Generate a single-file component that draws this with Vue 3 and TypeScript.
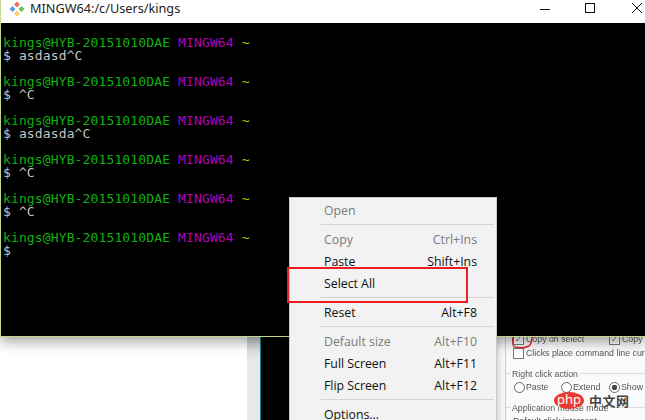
<script setup lang="ts">
interface Item { label?: string; key?: string; off?: boolean; sep?: boolean }
const items: Item[] = [
  { label: 'Open', off: true },
  { sep: true },
  { label: 'Copy', key: 'Ctrl+Ins', off: true },
  { label: 'Paste', key: 'Shift+Ins' },
  { label: 'Select All' },
  { sep: true },
  { label: 'Reset', key: 'Alt+F8' },
  { sep: true },
  { label: 'Default size', key: 'Alt+F10', off: true },
  { label: 'Full Screen', key: 'Alt+F11' },
  { label: 'Flip Screen', key: 'Alt+F12' },
  { sep: true },
  { label: 'Options...' }
]
</script>

<template>
  <div class="desk">
    <div class="back">
      <div class="back-side"></div>
      <div class="back-black"></div>
      <div class="dialog">
        <div class="opts">
          <div class="line">
            <div class="cell w96"><span class="box ticked">✓</span><span>Copy on select</span></div>
            <div class="cell"><span class="box ticked">✓</span><span>Copy a</span></div>
          </div>
          <div class="line">
            <div class="cell"><span class="box"></span><span>Clicks place command line cursor</span></div>
          </div>
          <div class="grp">
            <span class="grp-title">Right click action</span>
            <div class="line">
              <div class="cell w47"><span class="radio"></span><span>Paste</span></div>
              <div class="cell w48"><span class="radio"></span><span>Extend</span></div>
              <div class="cell"><span class="radio on"></span><span>Show m</span></div>
            </div>
          </div>
          <div class="grp">
            <span class="grp-title">Application mouse mode</span>
            <div class="line"><div class="cell"><span>Default click intercept</span></div></div>
          </div>
        </div>
      </div>
      <svg class="scribble" width="24" height="14" viewBox="0 0 24 14">
        <path d="M3 0 Q2 9 5 10 Q13 12 19 9 Q22 6 22 0" fill="none" stroke="#e0262c" stroke-width="1.4" />
      </svg>
      <div class="mark">
        <span class="php">php</span><span class="cn">中文网</span>
      </div>
    </div>

    <section class="term">
      <header class="bar">
        <svg class="logo" width="16" height="16" viewBox="0 0 16 16">
          <path d="M8 0.5 L11 3.5 L8 6.5 L5 3.5Z" fill="#ec7058" />
          <path d="M3.5 5 L6.5 8 L3.5 11 L0.5 8Z" fill="#5a9fe6" />
          <path d="M12.5 5 L15.5 8 L12.5 11 L9.5 8Z" fill="#6cc05c" />
          <path d="M8 9.5 L11 12.5 L8 15.5 L5 12.5Z" fill="#f6d36a" />
        </svg>
        <span class="title">MINGW64:/c/Users/kings</span>
        <span class="spacer"></span>
        <svg class="ctl" width="12" height="12" viewBox="0 0 12 12"><path d="M1 7.5H11" stroke="#111" /></svg>
        <svg class="ctl max" width="12" height="12" viewBox="0 0 12 12"><rect x="1.5" y="1.5" width="9" height="9" fill="none" stroke="#111" /></svg>
        <svg class="ctl close" width="12" height="12" viewBox="0 0 12 12"><path d="M1 1L11 11M11 1L1 11" stroke="#111" /></svg>
      </header>
      <pre class="screen"><b class="g">kings@HYB-20151010DAE</b> <b class="m">MINGW64</b> <b class="y">~</b>
$ asdasd^C

<b class="g">kings@HYB-20151010DAE</b> <b class="m">MINGW64</b> <b class="y">~</b>
$ ^C

<b class="g">kings@HYB-20151010DAE</b> <b class="m">MINGW64</b> <b class="y">~</b>
$ asdasda^C

<b class="g">kings@HYB-20151010DAE</b> <b class="m">MINGW64</b> <b class="y">~</b>
$ ^C

<b class="g">kings@HYB-20151010DAE</b> <b class="m">MINGW64</b> <b class="y">~</b>
$ ^C

<b class="g">kings@HYB-20151010DAE</b> <b class="m">MINGW64</b> <b class="y">~</b>
$</pre>
    </section>

    <ul class="menu">
      <template v-for="(it, i) in items" :key="i">
        <li v-if="it.sep" class="sep"></li>
        <li v-else class="row" :class="{ off: it.off }">
          <span>{{ it.label }}</span><span>{{ it.key }}</span>
        </li>
      </template>
    </ul>
    <div class="red"></div>
  </div>
</template>

<style>
html, body { margin: 0; background: #fff; }
</style>

<style scoped>
.desk { position: relative; width: 645px; height: 420px; overflow: hidden; background: #fff; font-family: "Open Sans", "Noto Sans", sans-serif; }
.term { position: absolute; left: 0; top: 0; width: 645px; height: 337px; box-sizing: border-box; border-left: 1px solid #c3d68f; border-bottom: 1px solid #c3d68f; display: flex; flex-direction: column; background: #000; box-shadow: 0 5px 12px rgba(0,0,0,.35); }
.bar { height: 23px; flex: none; background: #fff; display: flex; align-items: center; padding-left: 8px; box-sizing: border-box; }
.logo { margin-right: 5px; margin-bottom: 6px; }
.title { font-size: 12.7px; color: #222; font-family: "Noto Sans", sans-serif; margin-bottom: 7px; }
.spacer { flex: 1; }
.ctl { flex: none; margin-bottom: 7px; }
.ctl.max { margin-left: 33px; }
.ctl.close { margin-left: 35px; margin-right: 2px; }
.screen { margin: 0; padding: 13px 0 0 2px; font-family: "DejaVu Sans Mono", monospace; font-size: 13px; line-height: 13px; letter-spacing: .13px; color: #c4c4c4; }
.screen b { font-weight: 400; }
.g { color: #10b010; }
.m { color: #b400b4; }
.y { color: #c0c000; }
.back { position: absolute; left: 247px; top: 337px; right: 0; bottom: 0; display: flex; }
.back-side { width: 13px; flex: none; background: linear-gradient(180deg, #c4caca, #e6e9e7 22px); border-right: 1px solid #167d8c; }
.back-black { width: 236px; flex: none; background: #000; }
.dialog { flex: 1; background: #fafafa; filter: blur(.4px); font-family: "Liberation Sans", sans-serif; font-size: 8.8px; color: #555; padding-left: 8px; overflow: hidden; }
.opts { border-left: 1px solid #ccc; margin-top: -5px; height: 100px; }
.line { display: flex; height: 14px; align-items: center; white-space: nowrap; padding-left: 7px; }
.cell { display: flex; align-items: center; flex: none; }
.w96 { width: 96px; }
.w47 { width: 47px; }
.w48 { width: 48px; }
.box { width: 9px; height: 9px; border: 1px solid #777; background: #fff; margin-right: 2px; font-size: 8px; line-height: 9px; text-align: center; flex: none; }
.radio { width: 9px; height: 9px; border: 1px solid #666; border-radius: 50%; margin: 0 1px 0 1px; flex: none; background: #fff; }
.radio.on { background: radial-gradient(circle, #444 0 2.5px, #fff 3px); }
.grp { margin-top: 13px; border-top: 1px solid #ddd; padding-top: 6px; position: relative; }
.grp-title { position: absolute; top: -7px; left: 5px; padding: 0 1px; line-height: 14px; background: #fafafa; white-space: nowrap; }
.scribble { position: absolute; left: 263px; top: 0; }
.mark { position: absolute; left: 307px; top: 55px; display: flex; align-items: center; }
.php { width: 30px; height: 17px; border-radius: 50%; background: #ea3a32; color: #fff; font: 400 13px/15px "Noto Sans", sans-serif; text-align: center; }
.cn { font: 700 13px/17px "Noto Sans CJK SC", sans-serif; letter-spacing: .5px; color: #444; margin-left: 5px; }
.menu { position: absolute; left: 289px; top: 197px; width: 208px; margin: 0; padding: 1px 2px 0; box-sizing: border-box; height: 240px; list-style: none; background: #f2f2f2; border: 1px solid #c9c9c9; box-shadow: 0 2px 8px rgba(0,0,0,.25); font-size: 12.3px; color: #111; }
.row { height: 22px; display: flex; justify-content: space-between; align-items: center; padding: 0 17px 0 32px; white-space: nowrap; }
.off { color: #7a7a7a; }
.sep { height: 1px; background: #d4d4d4; margin: 3px 0 3px 29px; }
.red { position: absolute; left: 287px; top: 267px; width: 181px; height: 36px; box-sizing: border-box; border: 2px solid #ed1c24; }
</style>
